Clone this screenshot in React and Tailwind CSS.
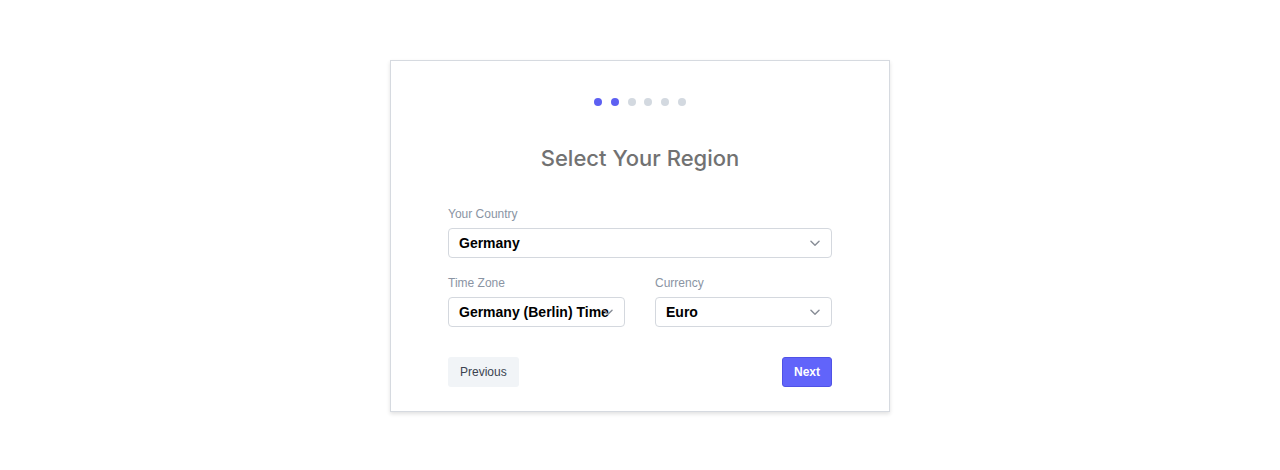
import React, { useState } from 'react'

const Chevron = ({ className }) => (
    <svg viewBox="0 0 20 20" fill="none" className={className}>
        <path d="M5.5 8l4.5 4.5 4.5-4.5" stroke="currentColor" strokeWidth="1.6" strokeLinecap="round" strokeLinejoin="round" />
    </svg>
)

const SelectBox = ({ value }) => (
    <div className="relative h-[30px] w-full overflow-hidden rounded-[4px] border border-[#d4d8de] bg-white">
        <div className="whitespace-nowrap pl-[10px] text-[14px] font-bold leading-[28px] text-black">{value}</div>
        <Chevron className="absolute right-[7px] top-1/2 h-[18px] w-[18px] -translate-y-1/2 text-[#8a8f98]" />
    </div>
)

const Field = ({ label, value }) => (
    <div className="flex flex-col">
        <label className="mb-[7px] text-[12px] leading-[14px] text-[#8a94a3]">{label}</label>
        <SelectBox value={value} />
    </div>
)

const App = () => {
    const [step] = useState(1);
    const dots = [0, 1, 2, 3, 4, 5];

    return (
        <div className="flex min-h-[470px] w-full justify-center bg-white pt-[60px]" style={{ fontFamily: '"Liberation Sans", Arial, sans-serif' }}>
            <div className="h-[352px] w-[500px] border border-[#d6dae0] bg-white px-[57px] pt-[37px] shadow-[0_2px_4px_rgba(0,0,0,0.12)]">
                {/* progress */}
                <div className="flex justify-center gap-[8.7px]">
                    {dots.map((d) => (
                        <span key={d} className={`h-[8px] w-[8px] rounded-full ${d <= step ? 'bg-[#5d60f2]' : 'bg-[#d3d9e0]'}`} />
                    ))}
                </div>

                <h1 className="mt-[38px] text-center font-['Inter',sans-serif] text-[22px] font-medium leading-[28px] text-[#727272]">Select Your Region</h1>

                <div className="mt-[35px] flex flex-col gap-[18px]">
                    <Field label="Your Country" value="Germany" />
                    <div className="grid grid-cols-2 gap-[30px]">
                        <Field label="Time Zone" value="Germany (Berlin) Time" />
                        <Field label="Currency" value="Euro" />
                    </div>
                </div>

                <div className="mt-[30px] flex items-center justify-between">
                    <button className="h-[30px] rounded-[3px] bg-[#f1f4f7] px-[12px] text-[12px] text-[#3b4350]">Previous</button>
                    <button className="h-[30px] rounded-[3px] border border-[#4f52e6] bg-[#6164fa] px-[11px] text-[12px] font-bold text-white">Next</button>
                </div>
            </div>
        </div>
    )
}

export default App
